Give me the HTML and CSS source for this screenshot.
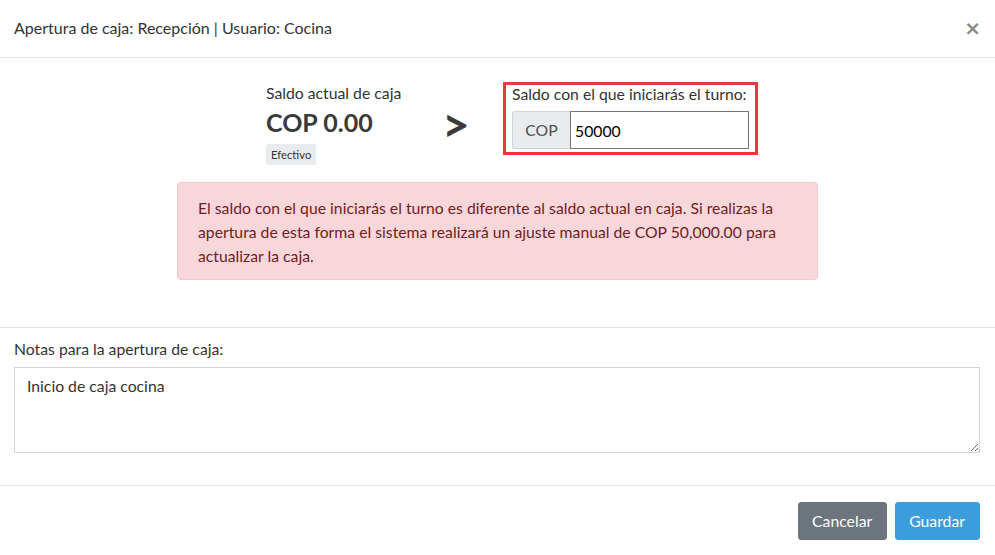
FILE: index.html
```html
<!DOCTYPE html>
<html lang="es">
<head>
<meta charset="utf-8">
<title>Apertura de caja</title>
<link rel="stylesheet" href="styles.css">
</head>
<body>
<div class="modal">
  <div class="modal-header">
    <h5 class="modal-title">Apertura de caja: Recepción | Usuario: Cocina</h5>
    <button class="close" type="button">×</button>
  </div>
  <div class="summary-section">
    <div class="summary">
      <div class="current">
        <div class="current-label">Saldo actual de caja</div>
        <h3 class="current-amount">COP 0.00</h3>
        <span class="badge">Efectivo</span>
      </div>
      <div class="arrow">&gt;</div>
      <div class="start-box">
        <label class="start-label">Saldo con el que iniciarás el turno:</label>
        <div class="input-group">
          <span class="addon">COP</span>
          <input class="amount-input" type="text" value="50000">
        </div>
      </div>
    </div>
    <div class="alert">El saldo con el que iniciarás el turno es diferente al saldo actual en caja. Si realizas la apertura de esta forma el sistema realizará un ajuste manual de COP 50,000.00 para actualizar la caja.</div>
  </div>
  <div class="notes-section">
    <label class="notes-label">Notas para la apertura de caja:</label>
    <textarea class="notes">Inicio de caja cocina</textarea>
  </div>
  <div class="modal-footer">
    <button class="btn btn-secondary" type="button">Cancelar</button>
    <button class="btn btn-primary" type="button">Guardar</button>
  </div>
</div>
</body>
</html>
```
FILE: styles.css
```css
* { box-sizing: border-box; }
html, body { margin: 0; padding: 0; background: #fff; }
body {
  font-family: Lato, "Open Sans", sans-serif;
  font-size: 15.75px;
  line-height: 22px;
  color: #333;
}
.modal { width: 995px; }
.modal-header {
  display: flex;
  justify-content: space-between;
  align-items: center;
  padding: 17px 14px 18px;
  border-bottom: 1px solid #e5e5e5;
}
.modal-title {
  margin: 0;
  font-size: 16px;
  font-weight: 400;
  line-height: 22px;
}
.close {
  border: 0;
  background: none;
  padding: 0;
  font-family: "DejaVu Sans", sans-serif;
  font-size: 20px;
  line-height: 22px;
  font-weight: 700;
  color: #8a8a8a;
}
.summary-section {
  padding: 24px 0 47px;
  border-bottom: 1px solid #e5e5e5;
}
.summary {
  display: grid;
  grid-template-columns: 176px 61px 255px;
  justify-content: center;
  padding-left: 29px;
}
.current {
  display: flex;
  flex-direction: column;
  align-items: flex-start;
}
.current-label { line-height: 22px; }
.current-amount {
  margin: 3px 0 6px;
  font-size: 25px;
  font-weight: 700;
  line-height: 31px;
  color: #3a3a3a;
}
.badge {
  display: block;
  background: #e9ecef;
  color: #333;
  font-size: 11.25px;
  line-height: 13px;
  padding: 4px 5px;
  border-radius: 2px;
}
.arrow {
  font-size: 48px;
  font-weight: 700;
  line-height: 48px;
  padding-top: 18px;
  color: #3a3a3a;
}
.start-box {
  border: 3px solid #e8383e;
  padding: 0 6px 3px;
  align-self: start;
}
.start-label {
  display: block;
  line-height: 17px;
  margin-bottom: 9px;
}
.input-group { display: flex; height: 38px; }
.addon {
  width: 58px;
  background: #e9ecef;
  border: 1px solid #ced4da;
  border-right: 0;
  border-radius: 3px 0 0 3px;
  color: #495057;
  text-align: center;
  line-height: 36px;
}
.amount-input {
  flex: 1;
  min-width: 0;
  border: 1px solid #767676;
  font-family: Lato, sans-serif;
  font-size: 15.75px;
  color: #000;
  padding: 0 4px;
  outline: none;
}
.alert {
  width: 641px;
  margin: 17px auto 0;
  padding: 13px 20px 11px;
  background: #f8d7da;
  border: 1px solid #f5c6cb;
  border-radius: 4px;
  color: #721c24;
  line-height: 24px;
}
.notes-section {
  padding: 10px 15px 32px 14px;
  border-bottom: 1px solid #e5e5e5;
}
.notes-label {
  display: block;
  margin-bottom: 7px;
}
.notes {
  display: block;
  width: 966px;
  height: 86px;
  border: 1px solid #ced4da;
  padding: 7px 12px;
  font-family: Lato, sans-serif;
  font-size: 15.75px;
  line-height: 22px;
  color: #333;
  resize: vertical;
}
.modal-footer {
  display: flex;
  justify-content: flex-end;
  gap: 8px;
  padding: 16px 15px;
}
.btn {
  font-family: Lato, sans-serif;
  font-size: 15.75px;
  line-height: 22px;
  padding: 7px 14px 7px 13px;
  border-radius: 3px;
  color: #fff;
  border: 1px solid transparent;
}
.btn-secondary { background: #6c757d; border-color: #6c757d; }
.btn-primary { background: #3b9ddb; border-color: #3b9ddb; }
```
